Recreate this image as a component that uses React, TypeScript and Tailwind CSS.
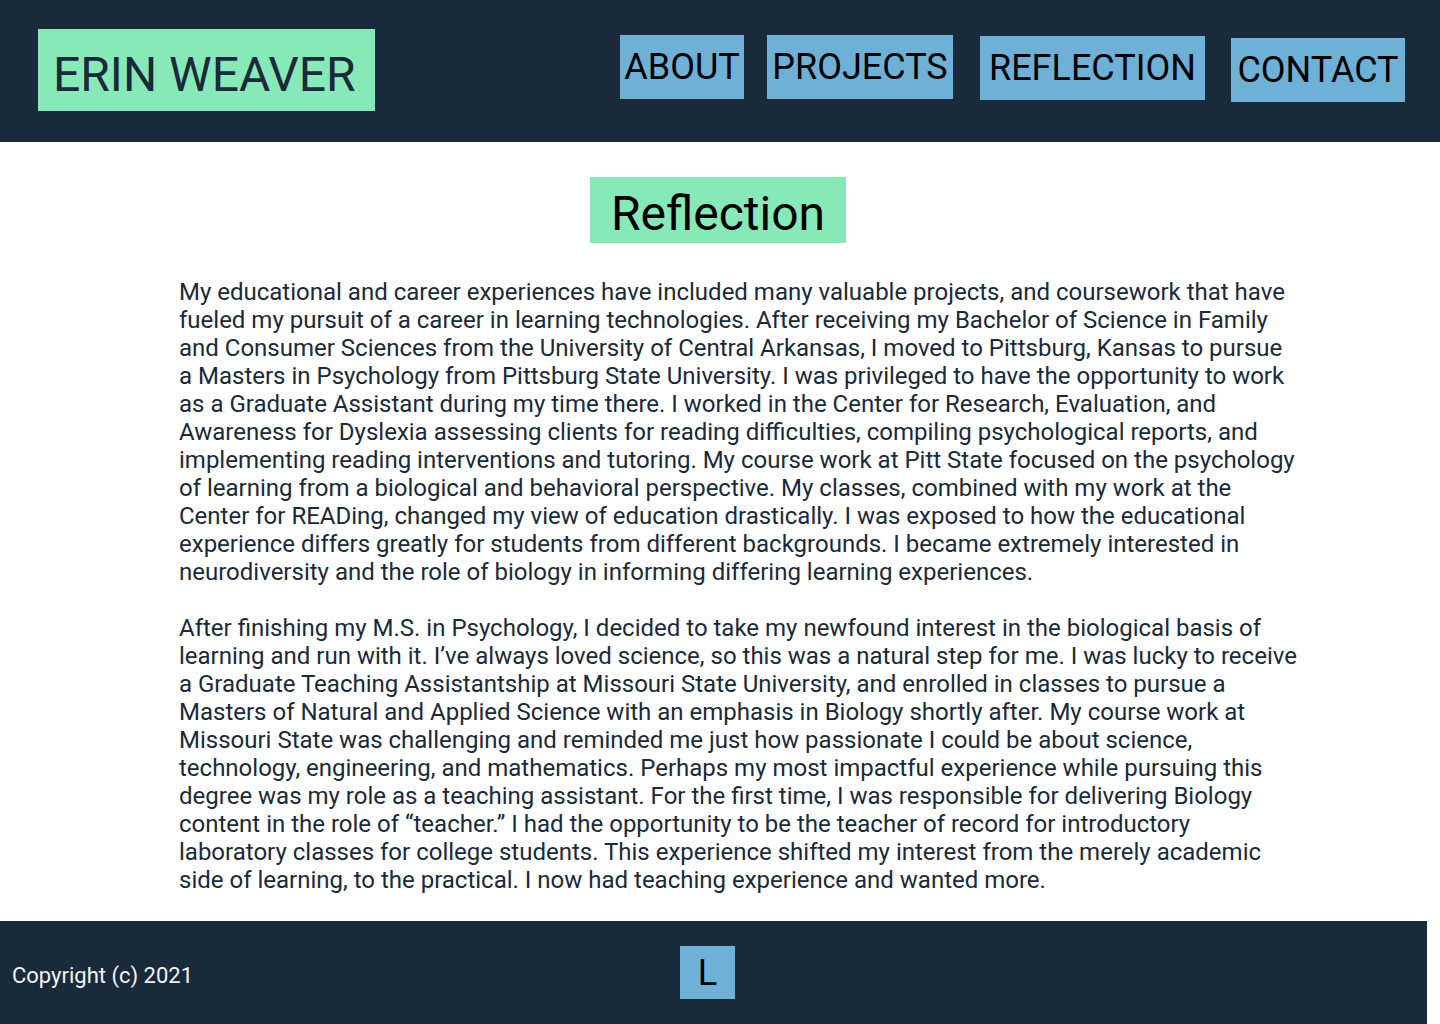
import React from "react";

const nav = [
  { label: "ABOUT", cls: "mt-[35px] w-[124px]" },
  { label: "PROJECTS", cls: "mt-[35px] w-[186px] ml-[23px]" },
  { label: "REFLECTION", cls: "mt-[36px] w-[225px] ml-[27px]" },
  { label: "CONTACT", cls: "mt-[38px] w-[174px] ml-[26px]" },
];

export default function App() {
  return (
    <div className="min-h-screen bg-white font-['Roboto',sans-serif]">
      <header className="flex h-[142px] w-full items-start bg-[#192a3a]">
        <div className="ml-[38px] mt-[29px] flex h-[82px] w-[337px] items-center bg-[#87e8b8] pl-[15px] pt-[9px] text-[48px] leading-none text-[#192a3a]">
          ERIN WEAVER
        </div>
        <nav className="ml-auto mr-[35px] flex">
          {nav.map((n) => (
            <div
              key={n.label}
              className={`${n.cls} flex h-[64px] items-center justify-center bg-[#6eb0d6] text-[36px] leading-none text-black`}
            >
              {n.label}
            </div>
          ))}
        </nav>
      </header>

      <main className="flex flex-col">
        <h1 className="mt-[35px] ml-[590px] flex h-[66px] w-[256px] items-center justify-center self-start bg-[#87e8b8] pt-[8px] text-[48px] font-normal leading-none text-black">
          Reflection
        </h1>
        <div className="mt-[35px] mb-[27px] ml-[179px] w-[1122px] text-[24px] leading-[28px] text-[#192a3a]">
          <p>
            My educational and career experiences have included many valuable projects, and coursework that have fueled my pursuit of a career in learning technologies. After receiving my Bachelor of Science in Family and Consumer Sciences from the University of Central Arkansas, I moved to Pittsburg, Kansas to pursue a Masters in Psychology from Pittsburg State University. I was privileged to have the opportunity to work as a Graduate Assistant during my time there. I worked in the Center for Research, Evaluation, and Awareness for Dyslexia assessing clients for reading difficulties, compiling psychological reports, and implementing reading interventions and tutoring. My course work at Pitt State focused on the psychology of learning from a biological and behavioral perspective. My classes, combined with my work at the Center for READing, changed my view of education drastically. I was exposed to how the educational experience differs greatly for students from different backgrounds. I became extremely interested in neurodiversity and the role of biology in informing differing learning experiences.
          </p>
          <p className="mt-[28px]">
            After finishing my M.S. in Psychology, I decided to take my newfound interest in the biological basis of learning and run with it. I’ve always loved science, so this was a natural step for me. I was lucky to receive a Graduate Teaching Assistantship at Missouri State University, and enrolled in classes to pursue a Masters of Natural and Applied Science with an emphasis in Biology shortly after. My course work at Missouri State was challenging and reminded me just how passionate I could be about science, technology, engineering, and mathematics. Perhaps my most impactful experience while pursuing this degree was my role as a teaching assistant. For the first time, I was responsible for delivering Biology content in the role of “teacher.” I had the opportunity to be the teacher of record for introductory laboratory classes for college students. This experience shifted my interest from the merely academic side of learning, to the practical. I now had teaching experience and wanted more.
          </p>
        </div>
      </main>

      <footer className="flex h-[103px] w-[1427px] items-center bg-[#192a3a]">
        <div className="ml-[12px] mt-[7px] text-[22px] leading-none text-[#f3f4f6]">
          Copyright (c) 2021
        </div>
        <div className="ml-[487px] flex h-[53px] w-[55px] items-center justify-center bg-[#6eb0d6] text-[36px] leading-none text-black">
          L
        </div>
      </footer>
    </div>
  );
}
